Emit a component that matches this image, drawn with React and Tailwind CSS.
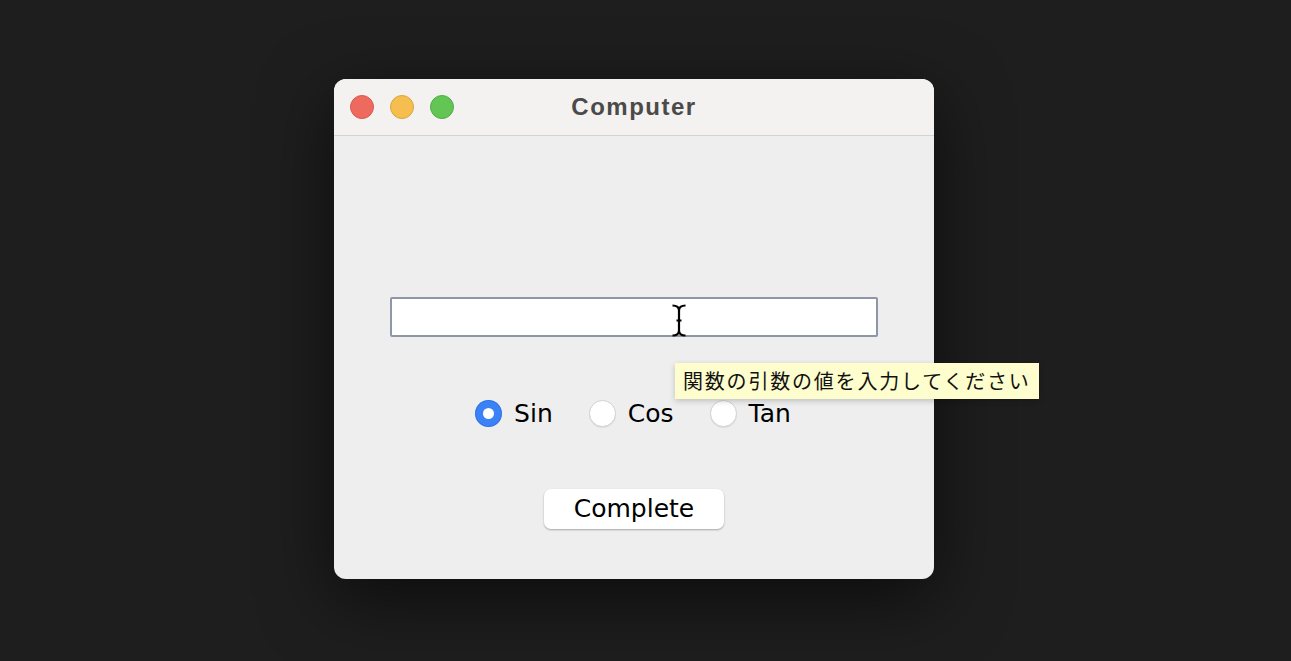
import React, { useState } from 'react';

function Radio({ label, checked, onClick }) {
  return (
    <button type="button" onClick={onClick} className="flex items-center gap-[12px]">
      {checked ? (
        <span className="w-[27px] h-[27px] rounded-full bg-[#3a82f6] shadow-[inset_0_0_0_1px_rgba(30,90,200,0.35)] flex items-center justify-center">
          <span className="w-[11px] h-[11px] rounded-full bg-white" />
        </span>
      ) : (
        <span className="w-[27px] h-[27px] rounded-full bg-white border border-[#d2d2d2] shadow-[0_1px_1px_rgba(0,0,0,0.08)]" />
      )}
      <span className="text-[25px] leading-none text-black font-['DejaVu_Sans',sans-serif]">{label}</span>
    </button>
  );
}

export default function App() {
  const [fn, setFn] = useState('Sin');

  return (
    <div className="w-full h-screen bg-[#1e1e1e] pt-[79px] pl-[334px] overflow-hidden">
      <div className="relative w-[600px] h-[500px] rounded-[12px] bg-[#eeeeee] shadow-[0_20px_70px_rgba(0,0,0,0.6)] flex flex-col">
        <div className="h-[57px] shrink-0 rounded-t-[12px] bg-[#f3f2f0] border-b border-[#d4d3d1] relative flex items-center justify-center">
          <div className="absolute left-[16px] top-[16px] flex gap-[16px]">
            <span className="w-[24px] h-[24px] rounded-full bg-[#ee6a5f] border border-[#d65a50]" />
            <span className="w-[24px] h-[24px] rounded-full bg-[#f5be4f] border border-[#d9a53f]" />
            <span className="w-[24px] h-[24px] rounded-full bg-[#62c554] border border-[#52ad45]" />
          </div>
          <span className="text-[24px] font-bold tracking-[1.5px] text-[#4b4a49] font-['Liberation_Sans',sans-serif]">Computer</span>
        </div>

        <div className="flex-1 flex flex-col items-center pt-[161px]">
          <div className="relative w-[488px] h-[40px] bg-white border-2 border-[#8e97a7] rounded-[2px]">
            <svg className="absolute left-[279px] top-[5px]" width="16" height="33" viewBox="0 0 16 33">
              <path d="M1.5 1.5 Q8 1.5 8 6.5 Q8 1.5 14.5 1.5 M8 6.5 V26.5 M8 26.5 Q8 31.5 1.5 31.5 M8 26.5 Q8 31.5 14.5 31.5 M5.5 16.5 H10.5" fill="none" stroke="#000" strokeWidth="2.2" />
            </svg>
          </div>

          <div className="mt-[63px] flex items-center gap-[36px] pr-[2px]">
            <Radio label="Sin" checked={fn === 'Sin'} onClick={() => setFn('Sin')} />
            <Radio label="Cos" checked={fn === 'Cos'} onClick={() => setFn('Cos')} />
            <Radio label="Tan" checked={fn === 'Tan'} onClick={() => setFn('Tan')} />
          </div>

          <button type="button" className="mt-[62px] w-[180px] h-[40px] bg-white rounded-[7px] shadow-[0_1px_2px_rgba(0,0,0,0.3)] text-[25px] text-black font-['DejaVu_Sans',sans-serif]">
            Complete
          </button>
        </div>

        <div className="absolute left-[341px] top-[284px] h-[36px] px-[8px] flex items-center bg-[#fdfdcd] shadow-[0_2px_6px_rgba(0,0,0,0.2)] text-[20px] tracking-[1.8px] text-[#111] whitespace-nowrap font-['Noto_Sans_CJK_JP',sans-serif]">
          関数の引数の値を入力してください
        </div>
      </div>
    </div>
  );
}
